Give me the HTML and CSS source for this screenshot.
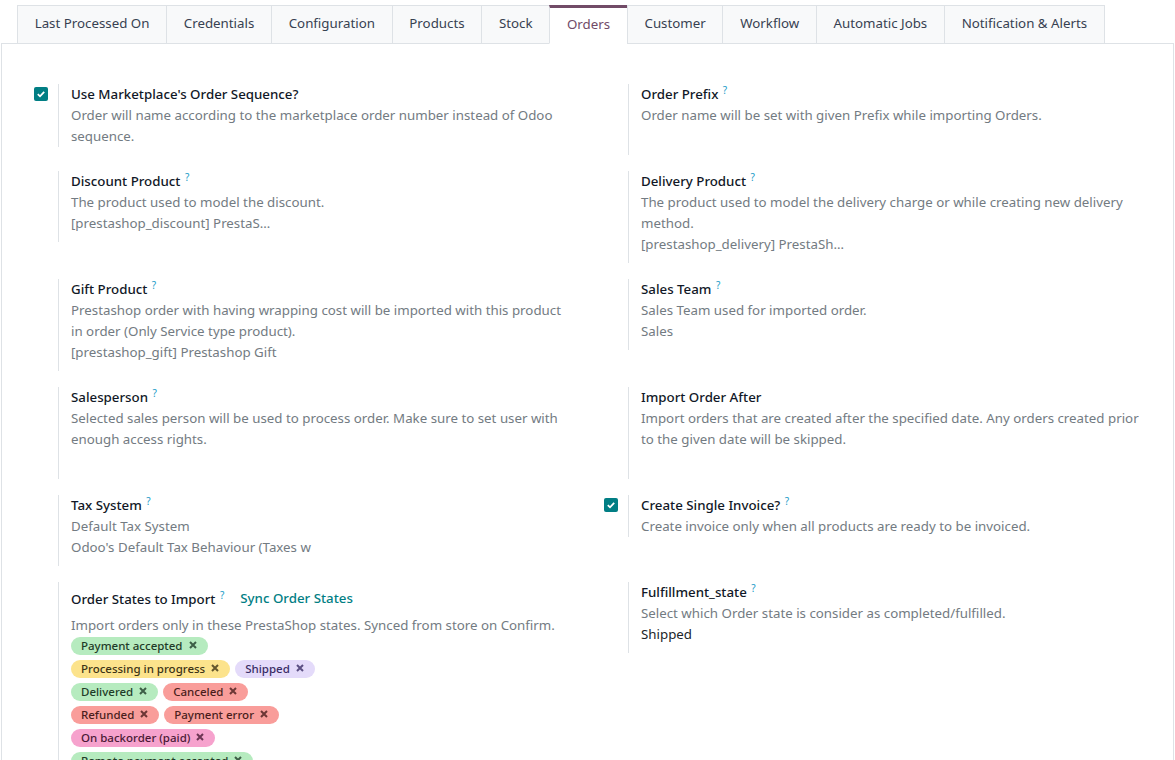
FILE: index.html
```html
<!DOCTYPE html>
<html lang="en">
<head>
  <meta charset="UTF-8">
  <title>PrestaShop Instance - Orders</title>
  <link rel="stylesheet" href="styles.css">
</head>
<body>

  <div class="sheet">
    <ul class="tabs">
      <li class="tab">Last Processed On</li>
      <li class="tab">Credentials</li>
      <li class="tab">Configuration</li>
      <li class="tab">Products</li>
      <li class="tab">Stock</li>
      <li class="tab active">Orders</li>
      <li class="tab">Customer</li>
      <li class="tab">Workflow</li>
      <li class="tab">Automatic Jobs</li>
      <li class="tab">Notification &amp; Alerts</li>
    </ul>

    <div class="pane">
      <div class="settings">

        <!-- row 1 -->
        <div class="setting">
          <div class="left">
            <span class="check"><svg viewBox="0 0 14 14" width="14" height="14"><path d="M3.8 7.2l2.2 2.1 4.2-4.4" fill="none" stroke="#fff" stroke-width="1.8"/></svg></span>
          </div>
          <div class="right">
            <div class="label">Use Marketplace's Order Sequence?</div>
            <div class="desc">Order will name according to the marketplace order number instead of Odoo sequence.</div>
          </div>
        </div>
        <div class="setting">
          <div class="left"></div>
          <div class="right">
            <div class="label">Order Prefix <sup class="hint">?</sup></div>
            <div class="desc">Order name will be set with given Prefix while importing Orders.</div>
            <div class="field"></div>
          </div>
        </div>

        <!-- row 2 -->
        <div class="setting">
          <div class="left"></div>
          <div class="right">
            <div class="label">Discount Product <sup class="hint">?</sup></div>
            <div class="desc">The product used to model the discount.</div>
            <div class="field">[prestashop_discount] PrestaS…</div>
          </div>
        </div>
        <div class="setting">
          <div class="left"></div>
          <div class="right">
            <div class="label">Delivery Product <sup class="hint">?</sup></div>
            <div class="desc">The product used to model the delivery charge or while creating new delivery method.</div>
            <div class="field">[prestashop_delivery] PrestaSh…</div>
          </div>
        </div>

        <!-- row 3 -->
        <div class="setting">
          <div class="left"></div>
          <div class="right">
            <div class="label">Gift Product <sup class="hint">?</sup></div>
            <div class="desc">Prestashop order with having wrapping cost will be imported with this product in order (Only Service type product).</div>
            <div class="field">[prestashop_gift] Prestashop Gift</div>
          </div>
        </div>
        <div class="setting">
          <div class="left"></div>
          <div class="right">
            <div class="label">Sales Team <sup class="hint">?</sup></div>
            <div class="desc">Sales Team used for imported order.</div>
            <div class="field">Sales</div>
          </div>
        </div>

        <!-- row 4 -->
        <div class="setting">
          <div class="left"></div>
          <div class="right">
            <div class="label">Salesperson <sup class="hint">?</sup></div>
            <div class="desc">Selected sales person will be used to process order. Make sure to set user with enough access rights.</div>
            <div class="field"></div>
          </div>
        </div>
        <div class="setting">
          <div class="left"></div>
          <div class="right">
            <div class="label">Import Order After</div>
            <div class="desc">Import orders that are created after the specified date. Any orders created prior to the given date will be skipped.</div>
            <div class="field"></div>
          </div>
        </div>

        <!-- row 5 -->
        <div class="setting">
          <div class="left"></div>
          <div class="right">
            <div class="label">Tax System <sup class="hint">?</sup></div>
            <div class="desc">Default Tax System</div>
            <div class="field select">Odoo's Default Tax Behaviour (Taxes w</div>
          </div>
        </div>
        <div class="setting">
          <div class="left">
            <span class="check"><svg viewBox="0 0 14 14" width="14" height="14"><path d="M3.8 7.2l2.2 2.1 4.2-4.4" fill="none" stroke="#fff" stroke-width="1.8"/></svg></span>
          </div>
          <div class="right">
            <div class="label">Create Single Invoice? <sup class="hint">?</sup></div>
            <div class="desc">Create invoice only when all products are ready to be invoiced.</div>
          </div>
        </div>

        <!-- row 6 -->
        <div class="setting">
          <div class="left"></div>
          <div class="right">
            <div class="label-row">
              <div class="label">Order States to Import <sup class="hint">?</sup></div>
              <span class="btn-link">Sync Order States</span>
            </div>
            <div class="desc">Import orders only in these PrestaShop states. Synced from store on Confirm.</div>
            <div class="tags">
              <span class="tag green">Payment accepted <svg class="x" viewBox="0 0 8 8" width="8" height="8"><path d="M1 1l6 6M7 1l-6 6"/></svg></span><br>
              <span class="tag yellow">Processing in progress <svg class="x" viewBox="0 0 8 8" width="8" height="8"><path d="M1 1l6 6M7 1l-6 6"/></svg></span><span class="tag lavender">Shipped <svg class="x" viewBox="0 0 8 8" width="8" height="8"><path d="M1 1l6 6M7 1l-6 6"/></svg></span><br>
              <span class="tag green">Delivered <svg class="x" viewBox="0 0 8 8" width="8" height="8"><path d="M1 1l6 6M7 1l-6 6"/></svg></span><span class="tag red">Canceled <svg class="x" viewBox="0 0 8 8" width="8" height="8"><path d="M1 1l6 6M7 1l-6 6"/></svg></span><br>
              <span class="tag red">Refunded <svg class="x" viewBox="0 0 8 8" width="8" height="8"><path d="M1 1l6 6M7 1l-6 6"/></svg></span><span class="tag red">Payment error <svg class="x" viewBox="0 0 8 8" width="8" height="8"><path d="M1 1l6 6M7 1l-6 6"/></svg></span><br>
              <span class="tag pink">On backorder (paid) <svg class="x" viewBox="0 0 8 8" width="8" height="8"><path d="M1 1l6 6M7 1l-6 6"/></svg></span><br>
              <span class="tag green">Remote payment accepted <svg class="x" viewBox="0 0 8 8" width="8" height="8"><path d="M1 1l6 6M7 1l-6 6"/></svg></span>
            </div>
          </div>
        </div>
        <div class="setting">
          <div class="left"></div>
          <div class="right">
            <div class="label">Fulfillment_state <sup class="hint">?</sup></div>
            <div class="desc">Select which Order state is consider as completed/fulfilled.</div>
            <div class="field dark">Shipped</div>
          </div>
        </div>

      </div>
    </div>
  </div>

</body>
</html>
```

FILE: styles.css
```css
body {
  margin: 0;
  font-family: "Noto Sans", sans-serif;
  font-size: 13.3px;
  line-height: 21px;
  color: #374151;
  background: white;
}
.sheet {
  margin: 0 1px;
}
.tabs {
  display: flex;
  list-style: none;
  margin: 0 0 -1px 0;
  padding: 5px 0 0 16px;
  position: relative;
  z-index: 1;
}
.tab {
  height: 35px;
  line-height: 35px;
  padding: 0 16.7px 2px;
  background: #f8f9fa;
  border: 1px solid #dee2e6;
  margin-left: -1px;
  color: #374151;
  white-space: nowrap;
}
.tab:first-child { margin-left: 0; }
.tab.active {
  background: white;
  border-top: 3px solid #714b67;
  border-bottom-color: white;
  height: 33px;
  line-height: 33px;
  color: #714b67;
}
.pane {
  border: 1px solid #dee2e6;
  border-bottom: none;
  min-height: 760px;
}
.settings {
  display: grid;
  grid-template-columns: 570px 570px;
  align-items: start;
  padding: 40px 0 0 28px;
}
.setting {
  display: flex;
  margin-bottom: 16px;
}
.left {
  width: 28px;
  flex: none;
}
.check {
  display: block;
  width: 14px;
  height: 14px;
  margin: 3px 0 0 4px;
  background: #017e84;
  border-radius: 2px;
}
.check svg { display: block; }
.right {
  border-left: 1px solid #dee2e6;
  padding: 0 28px 0 12px;
  flex: 1;
}
.label {
  font-weight: 500;
  color: #111827;
  line-height: 20px;
  padding-bottom: 1px;
}
.hint {
  color: #1a9bc7;
  font-size: 10px;
  font-weight: 400;
  vertical-align: top;
  line-height: 12px;
  margin-left: 1px;
}
.desc {
  color: #737b82;
}
.field {
  min-height: 21px;
  padding: 0 0 8px;
  color: #737b82;
}
.field.dark { color: #212529; }
.field.select {
  white-space: nowrap;
}
.label-row {
  display: flex;
  align-items: center;
  height: 33px;
  gap: 6px;
}
.label-row .label { padding-bottom: 0; }
.btn-link {
  color: #017e84;
  padding: 0 10px;
  font-weight: 500;
}
.tags {
  font-size: 11.5px;
  line-height: 18px;
  padding-bottom: 8px;
}
.tag {
  display: inline-block;
  height: 18px;
  margin: 1px 5px 4px 0;
  padding: 0 11px 0 10px;
  border-radius: 9px;
  white-space: nowrap;
  font-weight: 500;
}
.x {
  margin-left: 3px;
  vertical-align: 1px;
  stroke: currentColor;
  stroke-width: 2;
  opacity: 0.8;
}
.green { background: #b6ebbf; color: #1f3b28; }
.yellow { background: #fce38c; color: #3d3416; }
.lavender { background: #e4dbfa; color: #3a2d66; }
.red { background: #f99d9a; color: #4a1d1c; }
.pink { background: #f6a2cd; color: #4a1a35; }
```
